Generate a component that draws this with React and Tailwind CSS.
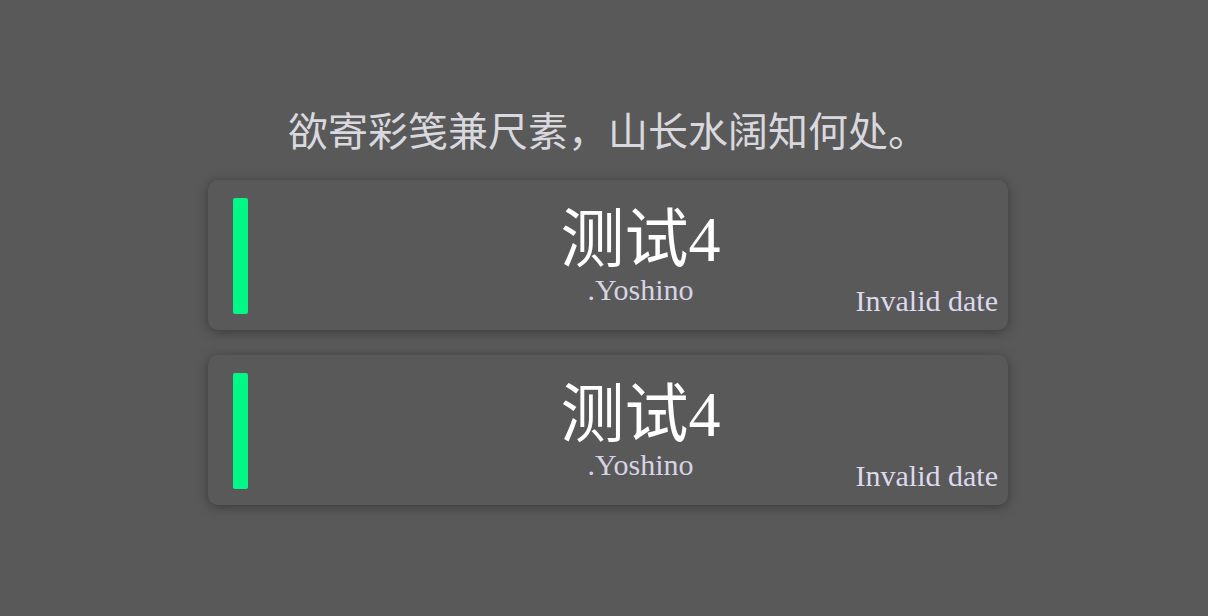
const serif = 'font-["Liberation_Serif","Noto_Sans_CJK_SC",serif]'

function Card({ title, author, date }) {
  return (
    <div className="flex h-[150px] rounded-[10px] bg-[#595959] shadow-[0_2px_12px_rgba(0,0,0,0.35)]">
      <div className="w-[65px] shrink-0 pl-[25px] pt-[18px]">
        <div className="h-[116px] w-[15px] rounded-[2px] bg-[#00f986]" />
      </div>
      <div className="relative flex-1 pt-[24px] text-center">
        <div className="text-[64px] leading-[71px] text-white">{title}</div>
        <div className="text-[30px] leading-[30px] text-[#d6d4e4]">{author}</div>
        <div className="absolute bottom-[14px] right-[10px] text-[30px] leading-[30px] text-[#dcd8ee]">{date}</div>
      </div>
    </div>
  )
}

export default function App() {
  return (
    <div className={`min-h-[616px] w-full bg-[#595959] pl-[8px] ${serif}`}>
      <div className="mx-auto w-[800px] pt-[108px]">
        <h1 className="mb-[22px] text-center text-[40px] leading-[50px] text-[#d8d8de]">
          欲寄彩笺兼尺素，山长水阔知何处。
        </h1>
        <div className="flex flex-col gap-[25px]">
          <Card title="测试4" author=".Yoshino" date="Invalid date" />
          <Card title="测试4" author=".Yoshino" date="Invalid date" />
        </div>
      </div>
    </div>
  )
}
